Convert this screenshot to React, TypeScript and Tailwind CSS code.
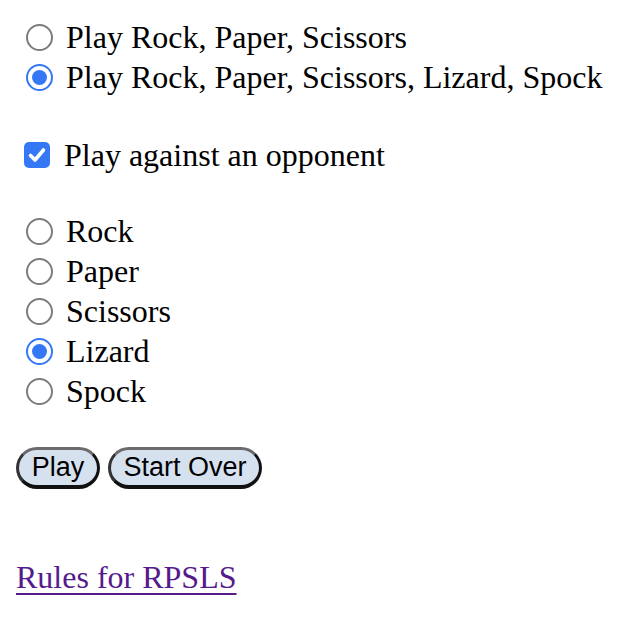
import { ReactNode } from 'react';

function Radio({ checked, children }: { checked?: boolean; children: ReactNode }) {
    return (
        <div className="flex h-10 items-center">
            {checked ? (
                <span className="ml-[10px] mr-[13px] flex h-[27px] w-[27px] items-center justify-center rounded-full border-[2.5px] border-[#3478f6] bg-white">
                    <span className="h-[15px] w-[15px] rounded-full bg-[#3478f6]" />
                </span>
            ) : (
                <span className="ml-[10px] mr-[13px] h-[27px] w-[27px] rounded-full border-2 border-[#7c7c7c] bg-white" />
            )}
            <span>{children}</span>
        </div>
    );
}

export default function App() {
    return (
        <div className="bg-white px-4 pt-[17px] font-['Liberation_Serif',serif] text-[32px] leading-10 text-black">
            {/* Game mode */}
            <Radio>Play Rock, Paper, Scissors</Radio>
            <Radio checked>Play Rock, Paper, Scissors, Lizard, Spock</Radio>

            <div className="mt-[38px] flex h-10 items-center">
                <span className="ml-2 mr-[14px] flex h-[26px] w-[26px] items-center justify-center rounded-[5px] bg-[#3478f6]">
                    <svg viewBox="0 0 26 26" className="h-[26px] w-[26px]">
                        <path d="M6.5 13.5l4.5 4.5 8.5-10" fill="none" stroke="white" strokeWidth="3.6" strokeLinecap="round" strokeLinejoin="round" />
                    </svg>
                </span>
                <span>Play against an opponent</span>
            </div>

            {/* Weapons */}
            <div className="mt-9">
                <Radio>Rock</Radio>
                <Radio>Paper</Radio>
                <Radio>Scissors</Radio>
                <Radio checked>Lizard</Radio>
                <Radio>Spock</Radio>
            </div>

            <div className="mt-[36px] flex gap-2 font-['Liberation_Sans',sans-serif] text-[27px] leading-none">
                <button type="button" className="h-[42px] w-[84px] rounded-full border-[3px] border-b-4 border-[#111] border-t-[#6b6b6b] border-l-[#333] bg-[#d6e1f0]">
                    Play
                </button>
                <button type="button" className="h-[42px] w-[154px] rounded-full border-[3px] border-b-4 border-[#111] border-t-[#6b6b6b] border-l-[#333] bg-[#d6e1f0]">
                    Start Over
                </button>
            </div>

            <div className="mt-[68px] pb-5">
                <a href="#" className="text-[#551a8b] underline decoration-2 underline-offset-[5px]">
                    Rules for RPSLS
                </a>
            </div>
        </div>
    );
}
